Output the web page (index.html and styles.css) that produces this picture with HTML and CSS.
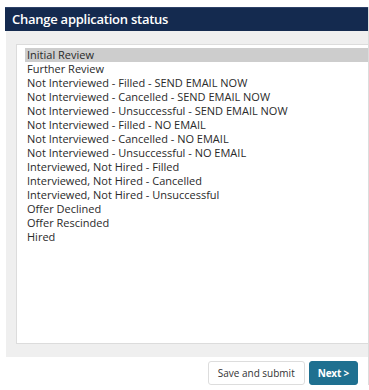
FILE: index.html
```html
<!DOCTYPE html>
<html lang="en">
<head>
    <meta charset="UTF-8">
    <meta name="viewport" content="width=device-width, initial-scale=1.0">
    <title>Change application status</title>
    <link rel="stylesheet" href="styles.css">
</head>
<body>
    <div class="dialog">
        <h2 class="dialog-title">Change application status</h2>

        <!-- Status list -->
        <div class="dialog-body">
            <div class="status-list">
                <div class="status-option selected">Initial Review</div>
                <div class="status-option">Further Review</div>
                <div class="status-option">Not Interviewed - Filled - SEND EMAIL NOW</div>
                <div class="status-option">Not Interviewed - Cancelled - SEND EMAIL NOW</div>
                <div class="status-option">Not Interviewed - Unsuccessful - SEND EMAIL NOW</div>
                <div class="status-option">Not Interviewed - Filled - NO EMAIL</div>
                <div class="status-option">Not Interviewed - Cancelled - NO EMAIL</div>
                <div class="status-option">Not Interviewed - Unsuccessful - NO EMAIL</div>
                <div class="status-option">Interviewed, Not Hired - Filled</div>
                <div class="status-option">Interviewed, Not Hired - Cancelled</div>
                <div class="status-option">Interviewed, Not Hired - Unsuccessful</div>
                <div class="status-option">Offer Declined</div>
                <div class="status-option">Offer Rescinded</div>
                <div class="status-option">Hired</div>
            </div>
        </div>

        <!-- Actions -->
        <div class="dialog-footer">
            <button class="btn btn-default">Save and submit</button>
            <button class="btn btn-primary">Next &gt;</button>
        </div>
    </div>
</body>
</html>
```

FILE: styles.css
```css
body {
    font-family: 'Open Sans', 'Liberation Sans', sans-serif;
    margin: 0;
    padding: 7px 0 0 6px;
    background-color: #ffffff;
    color: #333;
    overflow: hidden;
}
.dialog {
    width: 362px;
    border-right: 1px solid #dcdcdc;
}
.dialog-title {
    margin: 0 0 0 -1px;
    height: 24px;
    line-height: 23px;
    padding: 0 7px;
    background-color: #142a4f;
    border-top: 1px solid #2d4168;
    box-sizing: border-box;
    color: #ffffff;
    font-size: 13px;
    font-weight: 650;
    font-stretch: 91%;
    letter-spacing: -0.25px;
}
.dialog-body {
    background-color: #efefef;
    padding: 13px 0 13px 10px;
}
.status-list {
    background-color: #ffffff;
    border: 1px solid #dcdcdc;
    border-right: none;
    padding: 3px 0 0 8px;
    box-sizing: border-box;
    height: 300px;
}
.status-option {
    height: 14px;
    line-height: 13px;
    padding-left: 2px;
    font-size: 11px;
    color: #2a2a2a;
    white-space: nowrap;
}
.selected {
    background-color: #cdcdcd;
}
.dialog-footer {
    display: flex;
    justify-content: flex-end;
    gap: 4px;
    padding: 4px 10px 0 0;
}
.btn {
    font-family: 'Open Sans', 'Liberation Sans', sans-serif;
    font-size: 10px;
    height: 24px;
    padding: 0 8px;
    border-radius: 3px;
    cursor: pointer;
}
.btn-default {
    background-color: #ffffff;
    border: 1px solid #dddddd;
    color: #333;
    padding: 0 9px;
}
.btn-primary {
    background-color: #1f7090;
    border: 1px solid #1f7090;
    color: #ffffff;
    font-weight: 700;
    letter-spacing: -0.2px;
}
```
